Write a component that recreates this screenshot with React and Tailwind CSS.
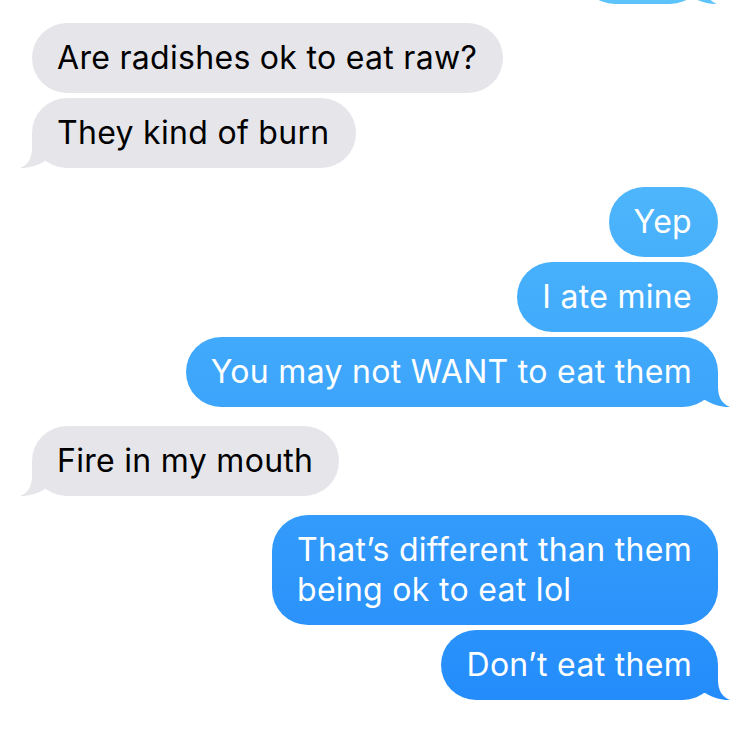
import React from "react";

const messages = [
  { from: "them", text: "Are radishes ok to eat raw?" },
  { from: "them", text: "They kind of burn", tail: true },
  { from: "me", text: "Yep", gap: true },
  { from: "me", text: "I ate mine" },
  { from: "me", text: "You may not WANT to eat them", tail: true },
  { from: "them", text: "Fire in my mouth", tail: true, gap: true },
  { from: "me", text: "That’s different than them\nbeing ok to eat lol", gap: true },
  { from: "me", text: "Don’t eat them", tail: true },
];

const tailClip =
  "[clip-path:path('M0_0H14V14C14_24_18_31_26_34C19_34.5_9_32_1_27L0_27Z')]";

function Bubble({ from, text, tail, gap }) {
  const mine = from === "me";
  return (
    <div className={`flex ${mine ? "justify-end" : "justify-start"} ${gap ? "mt-[19px]" : "mt-[5px]"}`}>
      <div
        className={`relative whitespace-pre-line rounded-[36px] py-[15px] pl-[25px] pr-[26px] text-[32px] leading-[40px] tracking-[0.3px] ${
          mine
            ? "bg-fixed bg-linear-to-b from-[#5cc4fb] to-[#2189fa] text-white"
            : "bg-[#e5e5ea] text-black"
        }`}
      >
        {text}
        {tail && mine && (
          <span
            className={`absolute bottom-0 right-[-12px] h-[34px] w-[26px] bg-fixed bg-linear-to-b from-[#5cc4fb] to-[#2189fa] ${tailClip}`}
          />
        )}
        {tail && !mine && (
          <span className={`absolute bottom-0 left-[-12px] h-[34px] w-[26px] -scale-x-100 bg-[#e5e5ea] ${tailClip}`} />
        )}
      </div>
    </div>
  );
}

export default function App() {
  return (
    <div
      className="flow-root h-[738px] w-[749px] overflow-hidden bg-white pl-[32px] pr-[31px]"
      style={{ fontFamily: "Inter, 'Noto Sans', sans-serif" }}
    >
      {/* previous message, scrolled almost out of view */}
      <div className="relative ml-auto mr-[13px] mt-[-66px] h-[70px] w-[125px] rounded-[36px] bg-fixed bg-linear-to-b from-[#5cc4fb] to-[#2189fa]">
        <span
          className={`absolute bottom-0 right-[-12px] h-[34px] w-[26px] bg-fixed bg-linear-to-b from-[#5cc4fb] to-[#2189fa] ${tailClip}`}
        />
      </div>
      <div className="flex flex-col pt-[14px]">
        {messages.map((m, i) => (
          <Bubble key={i} {...m} />
        ))}
      </div>
    </div>
  );
}
